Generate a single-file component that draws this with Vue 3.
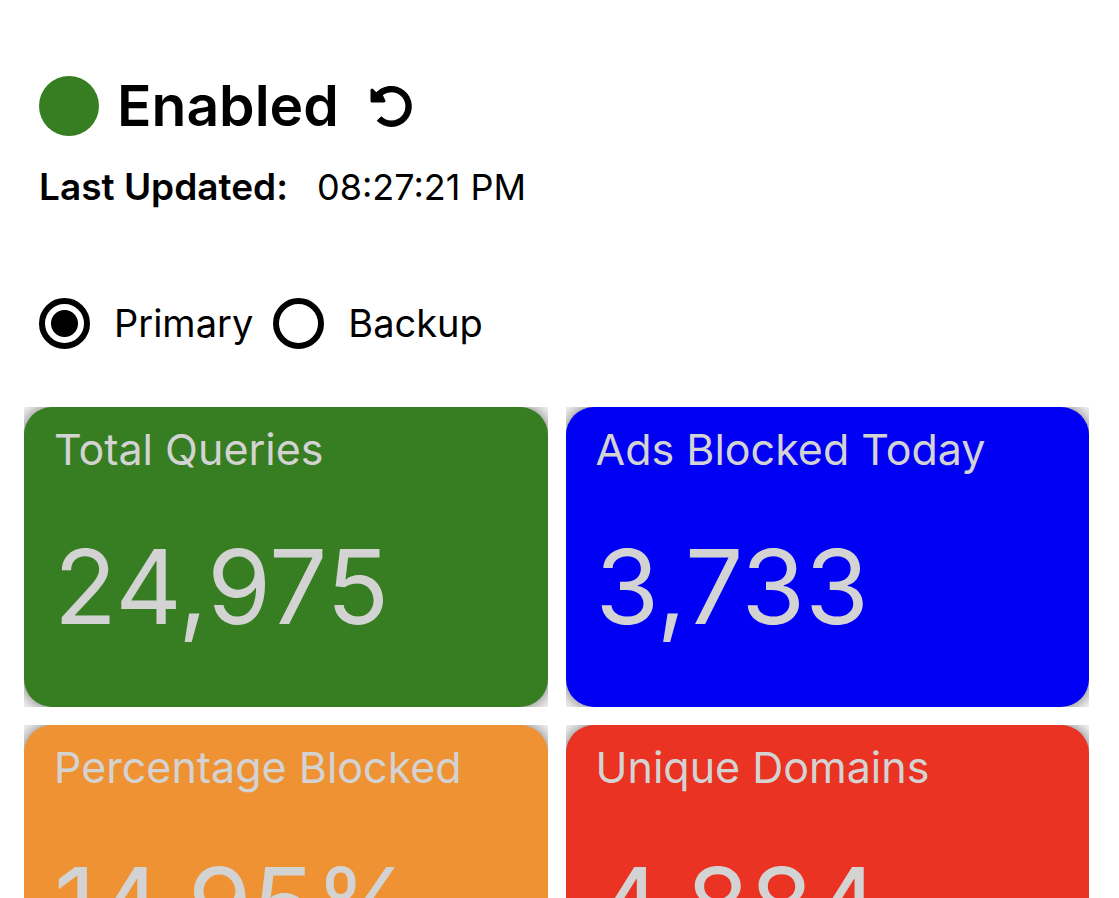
<script setup>
import { ref } from 'vue'

const server = ref('primary')
const servers = [
  { id: 'primary', label: 'Primary' },
  { id: 'backup', label: 'Backup' },
]
const stats = [
  { title: 'Total Queries', value: '24,975', tone: 'green' },
  { title: 'Ads Blocked Today', value: '3,733', tone: 'blue' },
  { title: 'Percentage Blocked', value: '14.95%', tone: 'orange' },
  { title: 'Unique Domains', value: '4,884', tone: 'red' },
]
</script>

<template>
  <main class="page">
    <header class="status">
      <div class="state">
        <span class="dot"></span>
        <h1>Enabled</h1>
        <button class="refresh" type="button" aria-label="Refresh">
          <svg viewBox="0 0 44 44" fill="none">
            <path d="M7.500 12A17.300 17.300 0 1 1 9 34.600" stroke="#000" stroke-width="6.400" />
            <path d="M2 6L6 10L10 8L12 13L14 17H2Z" fill="#000" stroke="#000" stroke-width="3" stroke-linejoin="round" />
          </svg>
        </button>
      </div>
      <p class="updated"><strong>Last Updated:</strong><span>08:27:21 PM</span></p>
    </header>
    <div class="servers" role="radiogroup" aria-label="Server">
      <label v-for="s in servers" :key="s.id">
        <input v-model="server" type="radio" name="server" :value="s.id" />
        <span>{{ s.label }}</span>
      </label>
    </div>
    <section class="grid">
      <div v-for="s in stats" :key="s.title" class="frame">
        <article class="card" :class="s.tone">
          <h2>{{ s.title }}</h2>
          <p>{{ s.value }}</p>
        </article>
      </div>
    </section>
  </main>
</template>

<style>
html { background: #fff; overflow: hidden; }
</style>

<style scoped>
.page {
  box-sizing: border-box;
  height: 100vh;
  overflow: hidden;
  padding: 70px 30px 0 24px;
  font-family: Inter, "Liberation Sans", sans-serif;
  color: #000;
}
.status { padding-left: 15px; }
.state { display: flex; align-items: center; height: 72px; }
.dot { width: 60px; height: 60px; border-radius: 50%; background: #377e22; }
h1 { margin: 0 0 0 18px; font-size: 57px; line-height: 74px; font-weight: 600; }
.refresh { width: 44px; height: 44px; margin: 0 0 0 31px; padding: 0; border: 0; background: none; }
.refresh svg { display: block; width: 44px; height: 44px; }
.updated { display: flex; gap: 29px; margin: 21px 0 0; font-size: 36px; line-height: 48px; }
.updated strong { font-size: 37px; font-weight: 600; }
.servers { display: flex; gap: 20px; margin-top: 81px; padding-left: 15px; }
.servers label { display: flex; align-items: center; gap: 24px; font-size: 38px; line-height: 62px; }
.servers input {
  appearance: none;
  box-sizing: border-box;
  width: 51px;
  height: 51px;
  margin: 0;
  border: 6px solid #000;
  border-radius: 50%;
}
.servers input:checked { background: radial-gradient(circle, #000 13px, #fff 14px); }
.grid { display: grid; grid-template-columns: 1fr 1fr; gap: 18px; margin-top: 53px; }
.frame { overflow: hidden; }
.card {
  box-sizing: border-box;
  height: 300px;
  padding: 14px 30px;
  border-radius: 28px;
  box-shadow: 0 0 20px #555;
  color: #d3d3d3;
}
.card h2 { margin: 0; font-size: 43px; line-height: 56px; font-weight: 400; white-space: nowrap; }
.card p { margin: 45px 0 0; font-size: 103px; line-height: 130px; }
.green { background: #377e22; }
.blue { background: #0000f5; }
.orange { background: #ef9234; }
.red { background: #ea3323; }
</style>
